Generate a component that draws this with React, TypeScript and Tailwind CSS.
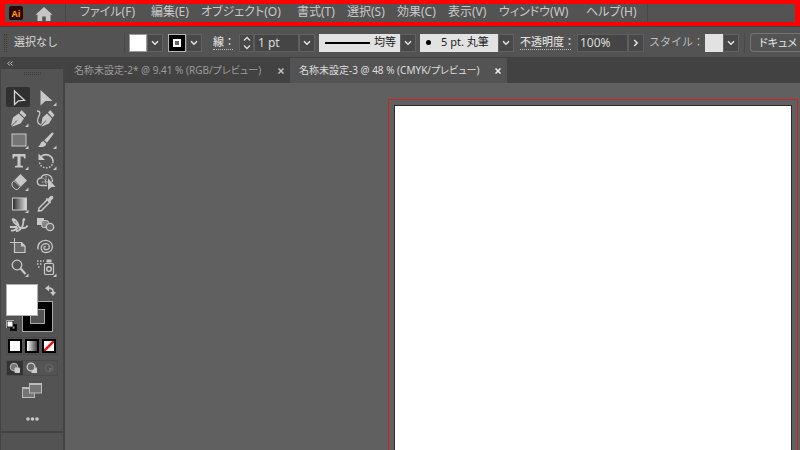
import { useState, type ReactNode } from "react";

const MENUS = [
  { label: "ファイル(F)", width: "w-[71px]" },
  { label: "編集(E)", width: "w-[50px]" },
  { label: "オブジェクト(O)", width: "w-[96px]" },
  { label: "書式(T)", width: "w-[50px]" },
  { label: "選択(S)", width: "w-[50px]" },
  { label: "効果(C)", width: "w-[51px]" },
  { label: "表示(V)", width: "w-[51px]" },
  { label: "ウィンドウ(W)", width: "w-[87px]" },
  { label: "ヘルプ(H)", width: "w-[61px]" },
];

const NIB = (
  <>
    <path d="M5 17.500L7 9.500L12.500 5.500L18 10.500L14.500 15.500L6.500 18.500z" />
    <path d="M5.500 18l5.500-5.500" stroke="#535353" strokeWidth="1" />
    <path d="M13.500 5L15.500 2L20.500 7L18.500 9.500z" />
  </>
);

const TOOLS: { name: string; more: boolean; icon: ReactNode }[] = [
  {
    name: "選択ツール",
    more: false,
    icon: (
      <path d="M8.500 4v13.500l4-3.700 6-.5z" fill="none" stroke="#d6d6d6" strokeWidth="1.300" />
    ),
  },
  { name: "ダイレクト選択ツール", more: true, icon: <path d="M6.500 3v15.500l5-4.500h7z" /> },
  { name: "ペンツール", more: true, icon: NIB },
  {
    name: "曲線ツール",
    more: false,
    icon: (
      <>
        <path
          d="M3 3c4 0 3 3 1.500 6S3 16 7 17"
          fill="none"
          stroke="#c8c8c8"
          strokeWidth="1.300"
        />
        <path d="M7 18L8.500 9.500L13 5.500L18 10.500L15 15.500L8 18.500z" />
        <path d="M7 18l5-5.500" stroke="#535353" />
        <path d="M14 4.500l2.200-2.500L20.500 7l-2 2.500z" />
      </>
    ),
  },
  {
    name: "長方形ツール",
    more: true,
    icon: <rect x="6" y="4" width="14" height="12" fill="#757575" stroke="#c8c8c8" />,
  },
  {
    name: "ブラシツール",
    more: true,
    icon: (
      <>
        <path d="M19 2.500c1 .5.500 1.500 0 2.200l-6 8-2.800-2.500 7-7c.6-.6 1.200-1 1.800-.7z" />
        <path d="M9.300 11l3 2.700c-.5 3-4 4-8.300 3 2.500-1 2.300-5 5.300-5.700z" />
      </>
    ),
  },
  {
    name: "文字ツール",
    more: true,
    icon: <path d="M6.500 3h13v4.500h-1.300L17.500 5.500h-3V14.500l2.500.5V16.500H9v-1.500l2.500-.5V5.500H8.500L7.800 7.500H6.500z" />,
  },
  {
    name: "回転ツール",
    more: true,
    icon: (
      <>
        <path d="M7 5.500c5-4 12-1 12 5" fill="none" stroke="#c8c8c8" strokeWidth="1.600" />
        <path
          d="M19 10.500c0 8-12 8.500-13.500 1"
          fill="none"
          stroke="#c8c8c8"
          strokeWidth="1.400"
          strokeDasharray="1.500 1.500"
        />
        <path d="M4.500 2.500V9H11z" />
      </>
    ),
  },
  {
    name: "消しゴムツール",
    more: true,
    icon: (
      <>
        <path d="M14.500 2L21 8.500l-6 6L8.500 8z" />
        <path d="M8 8.700l6.400 6-3 2.800H9.500L6 14v-3z" fill="none" stroke="#c8c8c8" />
      </>
    ),
  },
  {
    name: "シェイプ形成ツール",
    more: false,
    icon: (
      <>
        <path
          d="M13 13.500H7.500C2 13.500 2 6 7 6c1.500-5 10-4.500 11 1 1 1.500.5 2 0 3"
          fill="none"
          stroke="#c8c8c8"
          strokeWidth="1.300"
        />
        <path
          d="M7 6c4 0 5 2 5 7M8 10h6M12 4v6"
          fill="none"
          stroke="#c8c8c8"
          strokeDasharray="1.500 1"
        />
        <path d="M14 6v12l3.500-3h4z" />
      </>
    ),
  },
  {
    name: "グラデーションツール",
    more: true,
    icon: (
      <rect x="6.500" y="4" width="14" height="12" fill="url(#toolGradient)" stroke="#c8c8c8" />
    ),
  },
  {
    name: "スポイトツール",
    more: false,
    icon: (
      <>
        <path
          d="M13 6l-8 8-.5 3 3-.5 8-8"
          fill="none"
          stroke="#c8c8c8"
          strokeWidth="1.500"
        />
        <path d="M11.500 5l1.500-1 1 .7 2-2.200c2-2 4.500.5 2.700 2.500l-2.200 2 .7 1-1.200 1.500z" />
      </>
    ),
  },
  {
    name: "パペットワープツール",
    more: false,
    icon: (
      <>
        <path
          d="M7 4c3 1 4 2 5 5 1 4 2 4 5 4s4-1 4.500-2.500M7 5c1 4 4 5 6 6M5 15.500c3 1 5-1 7-3M4 12h7M18 4c-2 2 1 3-2 8M10 16c2 0 4-1 5-3"
          fill="none"
          stroke="#c8c8c8"
          strokeWidth="1.800"
        />
        <circle cx="18" cy="4.500" r="1.300" />
        <circle cx="7" cy="4.500" r="1.300" />
      </>
    ),
  },
  {
    name: "ブレンドツール",
    more: false,
    icon: (
      <>
        <rect x="3" y="3" width="7" height="7" />
        <rect x="7.500" y="5.500" width="7" height="7" rx="2" fill="#888" stroke="#c8c8c8" />
        <circle cx="16" cy="12" r="3.700" fill="#666" stroke="#c8c8c8" strokeWidth="1.300" />
      </>
    ),
  },
  {
    name: "アートボードツール",
    more: false,
    icon: (
      <>
        <path d="M4 6.500h6M8.500 2v6" stroke="#c8c8c8" />
        <path
          d="M8.500 6.500h7l3.500 3.500v6.500H8.500z"
          fill="#6a6a6a"
          stroke="#c8c8c8"
          strokeWidth="1.200"
        />
        <path d="M15 6v4.500h4.500z" />
      </>
    ),
  },
  {
    name: "スパイラルツール",
    more: false,
    icon: (
      <path
        d="M4 13.500C3 8 7 4 12 4.300c8 .7 9 11.700 0 12.200-6 0-6.500-8.500-.5-8.800 5 0 5 6 .7 6-3 0-2.700-3.500-.4-3.400"
        fill="none"
        stroke="#c8c8c8"
        strokeWidth="1.300"
      />
    ),
  },
  {
    name: "ズームツール",
    more: true,
    icon: (
      <>
        <circle cx="11" cy="7" r="4.800" fill="none" stroke="#c8c8c8" strokeWidth="1.300" />
        <path d="M14.500 10.500l5 5.500" stroke="#c8c8c8" strokeWidth="2.200" />
      </>
    ),
  },
  {
    name: "シンボルスプレーツール",
    more: true,
    icon: (
      <>
        <path d="M3 3h7M3 6h5M4 9h3" stroke="#c8c8c8" strokeWidth="1.500" strokeDasharray="1.500 1.500" />
        <path d="M12.500 1.500h5v3h-5z" />
        <rect x="10.500" y="5.500" width="9" height="11" rx="1" fill="none" stroke="#c8c8c8" strokeWidth="1.200" />
        <circle cx="15" cy="11" r="2.300" fill="none" stroke="#c8c8c8" strokeWidth="1.400" />
      </>
    ),
  },
];

const TABS = [
  { title: "名称未設定-2* @ 9.41 % (RGB/プレビュー)", width: "w-[225px]" },
  { title: "名称未設定-3 @ 48 % (CMYK/プレビュー)", width: "w-[217px]" },
];

function Dropdown({ label }: { label: string }) {
  return (
    <button
      aria-label={label}
      className="flex h-[18px] w-4 shrink-0 items-center justify-center border border-[#626262] bg-[#484848]"
    >
      <svg viewBox="0 0 8 6" className="h-1.5 w-2" fill="none" stroke="#e4e4e4" strokeWidth="1.500">
        <path d="M1 1.200l3 3 3-3" />
      </svg>
    </button>
  );
}

function AppBar() {
  return (
    <header className="flex h-[26px] shrink-0 border-x-[5px] border-y-4 border-[#ff0000] bg-[#535353]">
      <svg viewBox="0 0 14 14" className="mt-0.5 ml-1 size-3.5 shrink-0" role="img" aria-label="Illustrator">
        <rect width="14" height="14" rx="2" fill="#300500" />
        <text x="7" y="10.500" textAnchor="middle" fontSize="9" fontWeight="700" fontFamily="Open Sans, sans-serif" fill="#ff9a00">
          Ai
        </text>
      </svg>
      <button aria-label="ホーム" className="mt-[3px] ml-3 h-3.5 w-[18px] shrink-0">
        <svg viewBox="0 0 18 14" className="h-3.5 w-[18px]" fill="#c6c6c6">
          <path d="M9 0l8.500 7.800h-2V14h-4.700V9.500H7.200V14H2.500V7.800h-2z" />
        </svg>
      </button>
      <nav className="ml-3 flex border-x border-[#474747] pl-3.5 [font-feature-settings:'palt']">
        {MENUS.map((m) => (
          <button
            key={m.label}
            className={`h-[15px] shrink-0 text-left text-[12px] leading-[15px] whitespace-nowrap text-[#c9c9c9] ${m.width}`}
          >
            {m.label}
          </button>
        ))}
      </nav>
    </header>
  );
}

function ControlBar() {
  const [weight, setWeight] = useState("1 pt");
  const [opacity, setOpacity] = useState("100%");

  return (
    <div className="flex h-8 shrink-0 items-center overflow-hidden border-y border-[#404040] bg-[#535353] pt-px text-[11px] whitespace-nowrap text-[#dcdcdc]">
      <div className="ml-1 h-[18px] w-[3px] shrink-0 border-x border-dotted border-[#3c3c3c]" />
      <span className="ml-[7px] w-[110px] shrink-0">選択なし</span>
      <div className="h-5 w-px shrink-0 bg-[#494949]" />

      <div className="ml-1 flex shrink-0">
        <button aria-label="塗り" className="size-[18px] border border-[#9a9a9a] bg-white" />
        <Dropdown label="塗りを選択" />
      </div>
      <div className="ml-[5px] flex shrink-0">
        <button
          aria-label="線の色"
          className="flex size-[18px] items-center justify-center border border-[#b4b4b4] bg-black"
        >
          <span className="size-2 border-2 border-white bg-[#666]" />
        </button>
        <Dropdown label="線の色を選択" />
      </div>

      <label
        htmlFor="stroke-weight"
        className="ml-[11px] w-5 shrink-0 border-b border-dotted border-[#bdbdbd] leading-[14px] font-medium"
      >
        線：
      </label>
      <div className="ml-1.5 flex shrink-0">
        <button
          aria-label="線幅を増減"
          className="flex h-[18px] w-[15px] items-center justify-center border border-[#5e5e5e] bg-[#484848]"
        >
          <svg viewBox="0 0 8 14" className="h-3.5 w-2" fill="none" stroke="#dcdcdc" strokeWidth="1.400">
            <path d="M1 4.500l3-3 3 3M1 9.500l3 3 3-3" />
          </svg>
        </button>
        <input
          id="stroke-weight"
          value={weight}
          onChange={(e) => setWeight(e.target.value)}
          className="h-[18px] w-[45px] border border-[#5e5e5e] bg-[#454545] pl-[3px] text-[12px] outline-none"
        />
        <Dropdown label="線幅を選択" />
      </div>

      <div className="ml-1 flex shrink-0">
        <button
          aria-label="均等"
          className="flex h-[18px] w-[81px] items-center bg-[#e2e2e2] pl-1.5 text-[#1c1c1c]"
        >
          <span className="h-0.5 w-[45px] bg-black" />
          <span className="ml-1">均等</span>
        </button>
        <Dropdown label="可変線幅プロファイル" />
      </div>
      <div className="ml-1 flex shrink-0">
        <button className="flex h-[18px] w-[78px] items-center bg-[#e2e2e2] pl-1.5 text-[#1c1c1c]">
          <span className="size-[5px] rounded-full bg-black" />
          <span className="ml-2.5">5 pt. 丸筆</span>
        </button>
        <Dropdown label="ブラシ定義" />
      </div>

      <label
        htmlFor="opacity"
        className="ml-1.5 w-[51px] shrink-0 border-b border-dotted border-[#bdbdbd] leading-[14px] font-medium"
      >
        不透明度：
      </label>
      <div className="ml-1.5 flex shrink-0">
        <input
          id="opacity"
          value={opacity}
          onChange={(e) => setOpacity(e.target.value)}
          className="h-[18px] w-[51px] border border-[#5e5e5e] bg-[#454545] pl-0.5 text-[12px] outline-none"
        />
        <button
          aria-label="不透明度スライダー"
          className="flex h-[18px] w-4 items-center justify-center border border-[#5e5e5e] bg-[#484848]"
        >
          <svg viewBox="0 0 6 8" className="h-2 w-1.5" fill="none" stroke="#e4e4e4" strokeWidth="1.500">
            <path d="M1.200 1l3 3-3 3" />
          </svg>
        </button>
      </div>

      <span className="ml-[5px] w-[56px] shrink-0 text-[#bdbdbd]">スタイル：</span>
      <div className="flex shrink-0">
        <button aria-label="グラフィックスタイル" className="size-[18px] bg-[#e2e2e2]" />
        <Dropdown label="スタイルを選択" />
      </div>
      <div className="mx-[5px] h-5 w-px shrink-0 bg-[#494949]" />
      <button className="h-[19px] flex-1 rounded-l-sm border border-r-0 border-[#747474] pl-2 text-left leading-4 text-[#e6e6e6] [font-feature-settings:'palt']">
        ドキュメ
      </button>
    </div>
  );
}

function FillStroke() {
  return (
    <div className="relative mt-[5px] ml-[5px] h-[49px] w-[50px] shrink-0">
      <button
        aria-label="線"
        className="absolute top-[17px] left-4 size-[31px] border border-[#a8a8a8] bg-black p-[7px]"
      >
        <span className="block size-[15px] border border-[#a8a8a8] bg-[#535353]" />
      </button>
      <button
        aria-label="塗り"
        className="absolute top-0 left-0 size-8 border border-[#b0b0b0] bg-white"
      />
      <button aria-label="塗りと線を入れ替え" className="absolute top-px right-0 size-[11px]">
        <svg viewBox="0 0 12 12" className="size-[11px]" fill="#c8c8c8">
          <path d="M3 3.500c4.500-.5 6 1.500 6 5" fill="none" stroke="#c8c8c8" strokeWidth="1.800" />
          <path d="M0 3.500L4.500 0v7zM5.500 7.500h6.500L8.800 12z" />
        </svg>
      </button>
      <button aria-label="初期設定の塗りと線" className="absolute bottom-0.5 left-0 size-[11px]">
        <svg viewBox="0 0 11 11" className="size-[11px]">
          <rect x="4.500" y="4.500" width="6" height="6" fill="#000" stroke="#111" />
          <rect x="6.500" y="6.500" width="2" height="2" fill="#aaa" />
          <rect x="1" y="1" width="6" height="6" fill="#fff" stroke="#222" />
          <path d="M.5 8V.5H8" fill="none" stroke="#aaa" />
        </svg>
      </button>
    </div>
  );
}

function Toolbox() {
  const [active, setActive] = useState(0);

  return (
    <aside className="flex w-[65px] shrink-0 flex-col border-r-2 border-l border-[#434343] bg-[#535353]">
      <button aria-label="パネルを折りたたむ" className="flex h-[11px] shrink-0 items-center bg-[#424242] pl-1.5">
        <svg viewBox="0 0 6 5" className="h-[5px] w-1.5" fill="none" stroke="#c8c8c8">
          <path d="M2.800.5l-2 2 2 2M5.600.5l-2 2 2 2" />
        </svg>
      </button>
      <div className="mx-auto mt-[3px] h-[3px] w-[17px] shrink-0 border-y border-dotted border-[#3d3d3d]" />
      <div className="mt-3 ml-[5px] grid h-[192px] shrink-0 grid-cols-[24px_24px] grid-rows-9 gap-x-1">
        {TOOLS.map((tool, i) => (
          <button
            key={tool.name}
            aria-label={tool.name}
            onClick={() => setActive(i)}
            className={`h-5 w-6 rounded-xs ${i === active ? "bg-[#303030]" : ""}`}
          >
            <svg viewBox="0 0 24 20" className="h-5 w-6" fill="#c8c8c8">
              <defs>
                <linearGradient id="toolGradient">
                  <stop offset="0" stopColor="#2a2a2a" />
                  <stop offset="1" stopColor="#dedede" />
                </linearGradient>
              </defs>
              {tool.icon}
              {tool.more && <path d="M22.500 15.500v3.500H19z" />}
            </svg>
          </button>
        ))}
      </div>
      <FillStroke />
      <div className="mt-1 ml-[5px] flex h-[18px] w-[52px] shrink-0 items-center justify-between border border-[#4a4a4a] px-px">
        <button aria-label="カラー" className="size-3.5 border-2 border-black bg-white" />
        <button
          aria-label="グラデーション"
          className="size-3.5 border-2 border-black bg-linear-to-r from-white to-[#444]"
        />
        <button aria-label="なし" className="size-3.5 border-2 border-black bg-white">
          <svg viewBox="0 0 10 10" className="size-2.5">
            <path d="M0 10L10 0" stroke="#f01010" strokeWidth="2.500" />
          </svg>
        </button>
      </div>
      <div className="mt-[5px] ml-[5px] flex h-4 w-[52px] shrink-0 border border-[#4a4a4a]">
        <button aria-label="標準描画" className="flex w-4 items-center justify-center bg-[#333]">
          <svg viewBox="0 0 12 12" className="size-3">
            <circle cx="5" cy="5" r="3.800" fill="#777" stroke="#bbb" />
            <rect x="5.500" y="5.500" width="5.500" height="5.500" rx="1" fill="#ccc" />
          </svg>
        </button>
        <button aria-label="背面描画" className="flex w-[18px] items-center justify-center">
          <svg viewBox="0 0 12 12" className="size-3">
            <rect x="5.500" y="5.500" width="5.500" height="5.500" fill="#ccc" />
            <circle cx="5" cy="5" r="3.800" fill="#666" stroke="#ccc" strokeWidth="1.300" />
          </svg>
        </button>
        <button aria-label="内側描画" disabled className="flex w-4 items-center justify-center">
          <svg viewBox="0 0 12 12" className="size-3">
            <circle cx="6" cy="6" r="3.800" fill="none" stroke="#6a6a6a" />
            <path d="M6 6h3.500L7.500 9.300H6z" fill="#6a6a6a" />
          </svg>
        </button>
      </div>
      <button aria-label="スクリーンモードを変更" className="mt-[7px] ml-[21px] h-[15px] w-5 shrink-0">
        <svg viewBox="0 0 20 15" className="h-[15px] w-5" fill="#757575" stroke="#bcbcbc">
          <rect x=".5" y="4.500" width="12" height="10" />
          <path d="M.5 5.500h12M7.500 2h12" />
          <rect x="7.500" y=".5" width="12" height="9.500" />
          <path d="M7.500 1.500h12" />
        </svg>
      </button>
      <button aria-label="ツールバーを編集" className="mt-[19px] ml-[25px] h-1 w-[13px] shrink-0">
        <svg viewBox="0 0 13 4" className="h-1 w-[13px]" fill="#c8c8c8">
          <circle cx="2" cy="2" r="1.800" />
          <circle cx="6.500" cy="2" r="1.800" />
          <circle cx="11" cy="2" r="1.800" />
        </svg>
      </button>
      <div className="mt-2.5 h-0.5 shrink-0 bg-[#434343]" />
    </aside>
  );
}

function DocumentTabs() {
  const [current, setCurrent] = useState(1);

  return (
    <div className="flex h-[25px] shrink-0 bg-[#424242] text-[10px]">
      {TABS.map((tab, i) => (
        <div
          key={tab.title}
          className={`flex shrink-0 items-center pr-1 pl-[9px] ${tab.width} ${
            i === current ? "bg-[#535353] text-[#dedede]" : "text-[#9c9c9c]"
          }`}
        >
          <button
            onClick={() => setCurrent(i)}
            className="flex-1 text-left whitespace-nowrap [font-feature-settings:'palt']"
          >
            {tab.title}
          </button>
          <button aria-label="閉じる" className="flex size-2.5 items-center justify-center">
            <svg viewBox="0 0 6 6" className="size-1.5" stroke={i === current ? "#f0f0f0" : "#c0c0c0"} strokeWidth="1.500">
              <path d="M.5.5l5 5M5.500.5l-5 5" />
            </svg>
          </button>
        </div>
      ))}
    </div>
  );
}

export default function App() {
  return (
    <div className="flex h-screen flex-col overflow-hidden bg-[#606060] font-['Noto_Sans','Noto_Sans_CJK_JP',sans-serif]">
      <AppBar />
      <ControlBar />
      <div className="flex min-h-0 flex-1">
        <Toolbox />
        <div className="flex min-w-0 flex-1 flex-col">
          <DocumentTabs />
          <main className="flex flex-1 bg-[#606060] pt-4 pr-0.5 pl-[323px]">
            {/* bleed line around the artboard */}
            <div className="flex flex-1 border border-b-0 border-[#d22020] px-[5px] pt-[5px]">
              <div className="flex-1 border border-b-0 border-[#2c2c2c] bg-white" />
            </div>
          </main>
        </div>
      </div>
    </div>
  );
}
